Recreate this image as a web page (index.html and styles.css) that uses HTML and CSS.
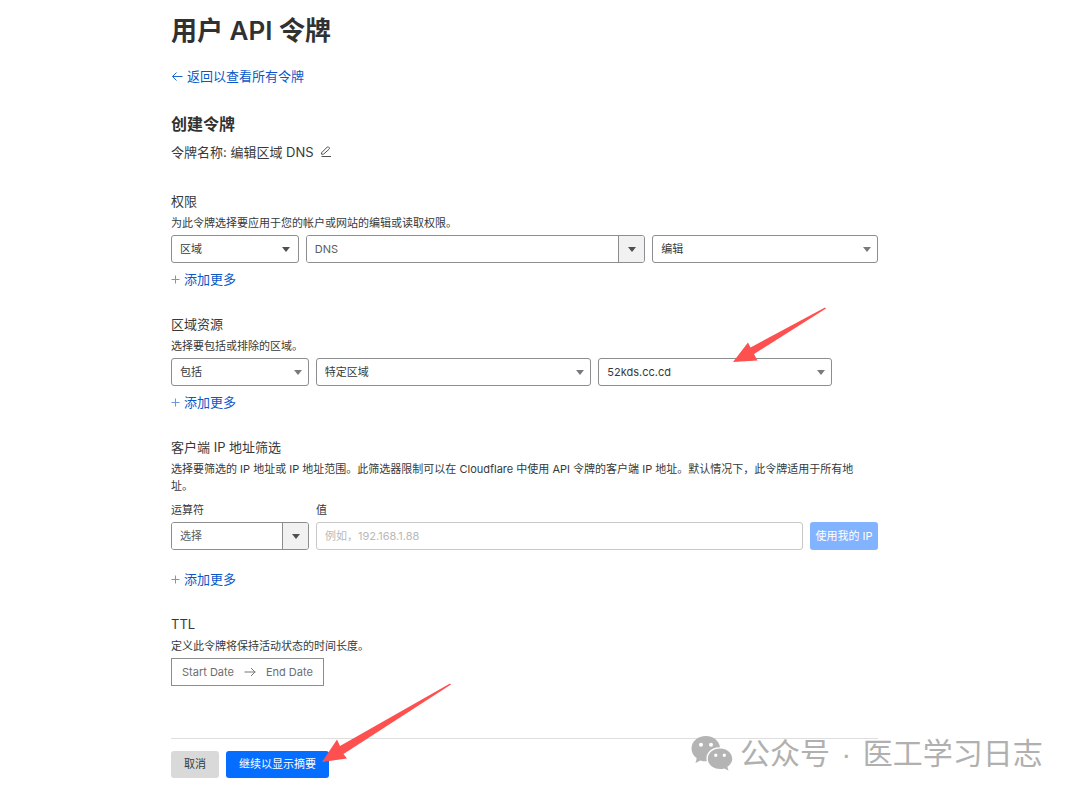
FILE: index.html
```html
<!DOCTYPE html>
<html lang="zh-CN">
<head>
<meta charset="utf-8">
<meta name="viewport" content="width=device-width, initial-scale=1">
<title>用户 API 令牌</title>
<link rel="stylesheet" href="styles.css">
</head>
<body>
<main class="page">
  <h1 class="title">用户 API 令牌</h1>
  <a class="link back" href="#"><svg class="back-icon" viewBox="0 0 12 12" aria-hidden="true"><path d="M11.5 6.5H1.5M5.5 2.5l-4 4 4 4"/></svg>返回以查看所有令牌</a>
  <h2 class="subtitle">创建令牌</h2>
  <div class="name">
    <span>令牌名称: 编辑区域 DNS</span>
    <button class="edit" type="button" aria-label="编辑名称"><svg viewBox="0 0 12 12" aria-hidden="true"><path d="M1.5 10.5H11M1.5 8.2V6.8L7.300 1Q7.900.5 8.500 1l.8.8q.5.6 0 1.200L3.500 8.200H1.500"/></svg></button>
  </div>

  <form class="form">
    <section class="section">
      <h3 class="heading">权限</h3>
      <p class="desc">为此令牌选择要应用于您的帐户或网站的编辑或读取权限。</p>
      <div class="row row-permissions">
        <div class="select dark"><select aria-label="权限范围"><option>区域</option></select><svg class="caret" viewBox="0 0 8 5" aria-hidden="true"><path d="M0 0h8L4 5z"/></svg></div>
        <div class="combo"><input class="combo-input" type="text" value="DNS" aria-label="权限项目"><button class="combo-toggle" type="button" aria-label="展开"><svg viewBox="0 0 8 5" aria-hidden="true"><path d="M0 0h8L4 5z"/></svg></button></div>
        <div class="select"><select aria-label="访问级别"><option>编辑</option></select><svg class="caret" viewBox="0 0 8 5" aria-hidden="true"><path d="M0 0h8L4 5z"/></svg></div>
      </div>
      <button class="link add" type="button"><svg class="plus" viewBox="0 0 9 9" aria-hidden="true"><path d="M4.500 .5v8M.5 4.500h8"/></svg>添加更多</button>
    </section>

    <section class="section">
      <h3 class="heading">区域资源</h3>
      <p class="desc">选择要包括或排除的区域。</p>
      <div class="row row-resources">
        <div class="select"><select aria-label="包括或排除"><option>包括</option></select><svg class="caret" viewBox="0 0 8 5" aria-hidden="true"><path d="M0 0h8L4 5z"/></svg></div>
        <div class="select"><select aria-label="区域类型"><option>特定区域</option></select><svg class="caret" viewBox="0 0 8 5" aria-hidden="true"><path d="M0 0h8L4 5z"/></svg></div>
        <div class="select"><select aria-label="区域"><option>52kds.cc.cd</option></select><svg class="caret" viewBox="0 0 8 5" aria-hidden="true"><path d="M0 0h8L4 5z"/></svg></div>
      </div>
      <button class="link add" type="button"><svg class="plus" viewBox="0 0 9 9" aria-hidden="true"><path d="M4.500 .5v8M.5 4.500h8"/></svg>添加更多</button>
    </section>

    <section class="section">
      <h3 class="heading">客户端 IP 地址筛选</h3>
      <p class="desc">选择要筛选的 IP 地址或 IP 地址范围。此筛选器限制可以在 Cloudflare 中使用 API 令牌的客户端 IP 地址。默认情况下，此令牌适用于所有地址。</p>
      <div class="row row-filter">
        <div class="field">
          <label class="label" for="operator">运算符</label>
          <div class="combo"><input class="combo-input" id="operator" type="text" value="选择"><button class="combo-toggle" type="button" aria-label="展开"><svg viewBox="0 0 8 5" aria-hidden="true"><path d="M0 0h8L4 5z"/></svg></button></div>
        </div>
        <div class="field">
          <label class="label" for="value">值</label>
          <input class="text" id="value" type="text" placeholder="例如，192.168.1.88">
        </div>
        <button class="use-ip" type="button">使用我的 IP</button>
      </div>
      <button class="link add add-spaced" type="button"><svg class="plus" viewBox="0 0 9 9" aria-hidden="true"><path d="M4.500 .5v8M.5 4.500h8"/></svg>添加更多</button>
    </section>

    <section class="section">
      <h3 class="heading">TTL</h3>
      <p class="desc">定义此令牌将保持活动状态的时间长度。</p>
      <div class="dates">
        <button class="date" type="button">Start Date</button>
        <svg class="date-arrow" viewBox="0 0 12 12" aria-hidden="true"><path d="M.5 6h11M7 2l4 4-4 4"/></svg>
        <button class="date" type="button">End Date</button>
      </div>
    </section>

    <footer class="actions">
      <button class="button" type="button">取消</button>
      <button class="button primary" type="submit">继续以显示摘要</button>
    </footer>
  </form>
</main>

<svg class="pointer pointer-zone" viewBox="0 0 94 56" aria-hidden="true"><path d="M92 .5L93 1.500 21 47l3.500 6.500L0 55l15-19.500L17.500 40.500z"/></svg>
<svg class="pointer pointer-submit" viewBox="0 0 130 80" aria-hidden="true"><path d="M128 .5L129 1.500 21.500 71l3.500 4.500L0 79l15-22.500 3 6.500z"/></svg>

<div class="watermark">
  <svg class="wechat" viewBox="0 0 42 34" aria-hidden="true">
    <path fill="#b4b4b4" fill-rule="evenodd" d="M15 0C6.500 0 .5 5.500 .5 12.500c0 4 2 7.300 5.200 9.700L4.500 27l5-2.500c2 .7 4 .9 6.200.8C14 17 20.500 11 29 11.200 28 4.500 22 0 15 0zM10 6.700a2 2 0 1 1 0 4 2 2 0 0 1 0-4zm10 0a2 2 0 1 1 0 4 2 2 0 0 1 0-4z"/>
    <path fill="#b4b4b4" fill-rule="evenodd" d="M29 12.500c-7 0-12.200 4.500-12.200 10.200S22 33 29 33c1.600 0 3-.2 4.300-.6l4.200 2-1.100-3.600c3-2 4.800-4.800 4.800-8.100 0-5.700-5.200-10.200-12.200-10.200zM24.800 17.500a1.700 1.700 0 1 1 0 3.400 1.700 1.700 0 0 1 0-3.400zm8.500 0a1.700 1.700 0 1 1 0 3.400 1.700 1.700 0 0 1 0-3.400z"/>
  </svg>
  <span>公众号<span class="dot"> · </span>医工学习日志</span>
</div>
</body>
</html>
```
FILE: styles.css
```css
* {
  box-sizing: border-box;
}

body {
  position: relative;
  margin: 0;
  background: #fff;
  color: #36393a;
  font: 11px/17px Inter, "Noto Sans CJK SC", sans-serif;
}

button,
input,
select {
  margin: 0;
  color: inherit;
  font: inherit;
}

button {
  padding: 0;
  border: 0;
  background: none;
  cursor: pointer;
}

svg {
  display: block;
  flex: none;
}

.page {
  padding: 15px 202px 17px 171px;
}

.title {
  margin: 0 0 19px;
  color: #313131;
  font-size: 26px;
  font-weight: 600;
  line-height: 32px;
}

.link {
  display: flex;
  align-items: center;
  width: fit-content;
  color: #0a58c8;
  font-size: 13px;
  line-height: 20px;
  text-decoration: none;
}

.back {
  gap: 4px;
}

.back-icon {
  width: 12px;
  height: 12px;
  fill: none;
  stroke: #1f66cc;
}

.subtitle {
  margin: 26px 0 6px;
  color: #313131;
  font-size: 16px;
  font-weight: 600;
  line-height: 24px;
}

.name {
  display: flex;
  align-items: center;
  gap: 6px;
  font-size: 13px;
  line-height: 20px;
}

.edit svg {
  width: 12px;
  height: 12px;
  fill: none;
  stroke: #4d5051;
}

.form {
  display: flex;
  flex-direction: column;
  gap: 25px;
  margin-top: 29px;
}

.heading {
  margin: 0 0 4px;
  font-size: 13px;
  font-weight: 400;
  line-height: 20px;
}

.desc {
  margin: 0 0 3px;
  padding-right: 10px;
}

.row {
  display: grid;
  gap: 7px;
}

.row-permissions {
  grid-template-columns: 128fr 340fr 226fr;
}

.row-resources {
  grid-template-columns: 138fr 276fr 234fr;
  padding-right: 46px;
}

.row-filter {
  grid-template-columns: 138fr 487fr 68fr;
  align-items: end;
  padding-top: 4px;
}

.field {
  min-width: 0;
}

.label {
  display: block;
  margin-bottom: 3px;
}

.select {
  position: relative;
  min-width: 0;
  color: #36393a;
}

.select select,
.text {
  display: block;
  width: 100%;
  height: 28px;
  padding: 0 8px;
  border: 1px solid #8b8d8e;
  border-radius: 3px;
  background: #fff;
  appearance: none;
}

.caret {
  position: absolute;
  top: 12px;
  right: 7px;
  width: 8px;
  height: 5px;
  fill: #777b7d;
  pointer-events: none;
}

.dark .caret {
  right: 9px;
  fill: #4d5051;
}

.combo {
  display: flex;
  height: 28px;
  overflow: hidden;
  border: 1px solid #8b8d8e;
  border-radius: 3px;
}

.combo-input {
  flex: 1;
  min-width: 0;
  padding: 0 8px;
  border: 0;
  color: #595c5d;
}

.combo-toggle {
  display: grid;
  place-items: center;
  width: 26px;
  border-left: 1px solid #8b8d8e;
  background: #f1f1f1;
}

.combo-toggle svg {
  width: 8px;
  height: 5px;
  fill: #4d5051;
}

.text {
  border-color: #c8c8c8;
}

.text::placeholder {
  color: #b9b9b9;
  opacity: 1;
}

.use-ip {
  height: 28px;
  border-radius: 3px;
  background: #82b3ff;
  color: #fff;
  white-space: nowrap;
}

.add {
  gap: 4px;
  margin-top: 6px;
}

.add-spaced {
  margin-top: 19px;
}

.plus {
  width: 9px;
  height: 9px;
  fill: none;
  stroke: #6b98db;
}

.dates {
  display: flex;
  align-items: center;
  gap: 10px;
  width: fit-content;
  height: 28px;
  padding: 0 10px;
  border: 1px solid #8b8d8e;
}

.date {
  color: #6c6e6f;
}

.date-arrow {
  width: 12px;
  height: 12px;
  fill: none;
  stroke: #777;
}

.actions {
  display: flex;
  gap: 7px;
  margin-top: 27px;
  padding-top: 12px;
  border-top: 1px solid #dedede;
}

.button {
  height: 27px;
  padding: 0 13px;
  border-radius: 3px;
  background: #d9d9d9;
}

.primary {
  background: #056dff;
  color: #fff;
}

.pointer {
  position: absolute;
  fill: #ff5050;
  pointer-events: none;
}

.pointer-zone {
  top: 307px;
  left: 733px;
  width: 94px;
  height: 56px;
}

.pointer-submit {
  top: 683px;
  left: 322px;
  width: 130px;
  height: 80px;
}

.watermark {
  position: absolute;
  top: 734px;
  left: 691px;
  display: flex;
  align-items: center;
  gap: 7px;
  color: #b0b0b0;
  font-family: "Noto Sans CJK SC", sans-serif;
  font-size: 30px;
  line-height: 34px;
  white-space: nowrap;
  pointer-events: none;
}

.dot {
  padding: 0 3px;
  font-family: "Liberation Sans", sans-serif;
}

.wechat {
  width: 42px;
  height: 34px;
  overflow: visible;
}
```
